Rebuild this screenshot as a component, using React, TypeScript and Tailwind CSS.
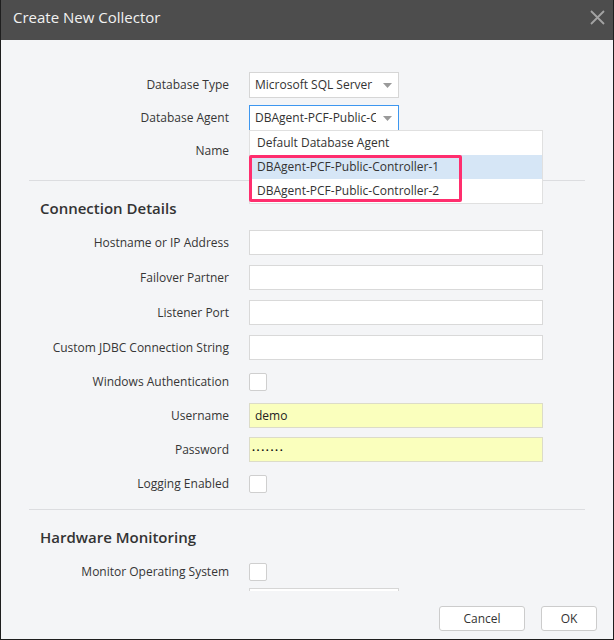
import React from 'react';

const AGENTS = ['Default Database Agent', 'DBAgent-PCF-Public-Controller-1', 'DBAgent-PCF-Public-Controller-2'];

const Label: React.FC<{ text: string }> = ({ text }) => (
  <div className="w-[228px] shrink-0 text-right text-[12px] text-[#363636] whitespace-nowrap">{text}</div>
);

const Caret: React.FC = () => (
  <svg width="9" height="5" viewBox="0 0 9 5">
    <path d="M0 0 L9 0 L4.5 5 Z" fill="#9a9a9a" />
  </svg>
);

const SelectBox: React.FC<{ value: string; focused?: boolean; children?: React.ReactNode }> = ({ value, focused, children }) => (
  <div
    className={`relative ml-[20px] flex h-[26px] w-[150px] bg-white border ${focused ? 'border-[#3d97f0]' : 'border-[#d6d6d6]'}`}
  >
    <div className="w-[126px] overflow-hidden whitespace-nowrap pl-[5px] text-[12px] leading-[24px] text-[#333]">{value}</div>
    <div className="flex flex-1 items-center justify-center pt-[1px]">
      <Caret />
    </div>
    {children}
  </div>
);

const TextField: React.FC<{ value?: string; autofill?: boolean; password?: boolean }> = ({ value, autofill, password }) => (
  <div
    className={`ml-[20px] h-[25px] w-[294px] border flex items-center pl-[5px] text-[12px] text-[#222] ${
      autofill ? 'bg-[#faffbd] border-[#dcdcc8]' : 'bg-white border-[#d9d9d9]'
    }`}
  >
    {password ? <span className="-ml-[3px] text-[8px] tracking-[1.6px] leading-none text-[#111]">•••••••</span> : value}
  </div>
);

const Checkbox: React.FC = () => (
  <div className="ml-[20px] h-[18px] w-[18px] rounded-[2px] border border-[#cfcfcf] bg-white" />
);

const Row: React.FC<{ label: string; className?: string; children: React.ReactNode }> = ({ label, className, children }) => (
  <div className={`flex items-center ${className ?? ''}`}>
    <Label text={label} />
    {children}
  </div>
);

const Divider: React.FC<{ className?: string }> = ({ className }) => (
  <div className={`mx-[28px] h-px bg-[#dcdde0] ${className ?? ''}`} />
);

const Heading: React.FC<{ text: string; className?: string }> = ({ text, className }) => (
  <div className={`pl-[39px] h-[20px] leading-[20px] text-[15px] font-semibold text-[#333] ${className ?? ''}`}>{text}</div>
);

const App: React.FC = () => {
  return (
    <div className="w-[614px] h-[640px] flex flex-col bg-[#f4f5f7] border border-t-0 border-[#1e1e1e] font-['Open_Sans',sans-serif] overflow-hidden">
      <header className="h-[40px] shrink-0 flex items-center justify-between bg-[#4d4d4d] pl-[12px] pr-[8px] pb-[6px]">
        <h1 className="text-[15px] text-[#f2f2f2] font-normal">Create New Collector</h1>
        <button className="p-0">
          <svg width="15" height="15" viewBox="0 0 15 15">
            <path d="M1 1 L14 14 M14 1 L1 14" stroke="#a3a3a3" strokeWidth="1.8" />
          </svg>
        </button>
      </header>

      <div className="h-[551px] shrink-0 overflow-hidden pt-[32px]">
        <Row label="Database Type">
          <SelectBox value="Microsoft SQL Server" />
        </Row>
        <Row label="Database Agent" className="mt-[7px] relative z-10">
          <SelectBox value="DBAgent-PCF-Public-Controller-1" focused>
            <ul className="absolute left-[-1px] top-[24px] w-[294px] border border-[#e0e0e0] bg-white">
              {AGENTS.map((a, i) => (
                <li
                  key={a}
                  className={`h-[24px] pl-[7px] text-[12px] leading-[24px] text-[#333] whitespace-nowrap ${i === 1 ? 'bg-[#d6e6f6]' : ''}`}
                >
                  {a}
                </li>
              ))}
              <div className="absolute left-[-1px] top-[24px] h-[47px] w-[213px] rounded-[2px] border-[3px] border-[#ff2e6e]" />
            </ul>
          </SelectBox>
        </Row>
        <Row label="Name" className="mt-[7px]">
          <TextField />
        </Row>

        <Divider className="mt-[17px]" />
        <Heading text="Connection Details" className="mt-[17px]" />

        <Row label="Hostname or IP Address" className="mt-[12px]">
          <TextField />
        </Row>
        <Row label="Failover Partner" className="mt-[10px]">
          <TextField />
        </Row>
        <Row label="Listener Port" className="mt-[10px]">
          <TextField />
        </Row>
        <Row label="Custom JDBC Connection String" className="mt-[10px]">
          <TextField />
        </Row>
        <Row label="Windows Authentication" className="mt-[13px]">
          <Checkbox />
        </Row>
        <Row label="Username" className="mt-[12px]">
          <TextField value="demo" autofill />
        </Row>
        <Row label="Password" className="mt-[9px]">
          <TextField autofill password />
        </Row>
        <Row label="Logging Enabled" className="mt-[13px]">
          <Checkbox />
        </Row>

        <Divider className="mt-[16px]" />
        <Heading text="Hardware Monitoring" className="mt-[17px]" />

        <Row label="Monitor Operating System" className="mt-[16px]">
          <Checkbox />
        </Row>
        <Row label="" className="mt-[7px]">
          <SelectBox value="" />
        </Row>
      </div>

      <footer className="h-[48px] shrink-0 flex justify-end items-start gap-[16px] pt-[15px] pr-[16px]">
        <button className="h-[25px] w-[86px] rounded-[3px] border border-[#cccccc] bg-white text-[12px] text-[#333]">Cancel</button>
        <button className="h-[25px] w-[56px] rounded-[3px] border border-[#cccccc] bg-white text-[12px] text-[#333]">OK</button>
      </footer>
    </div>
  );
};

export default App;
